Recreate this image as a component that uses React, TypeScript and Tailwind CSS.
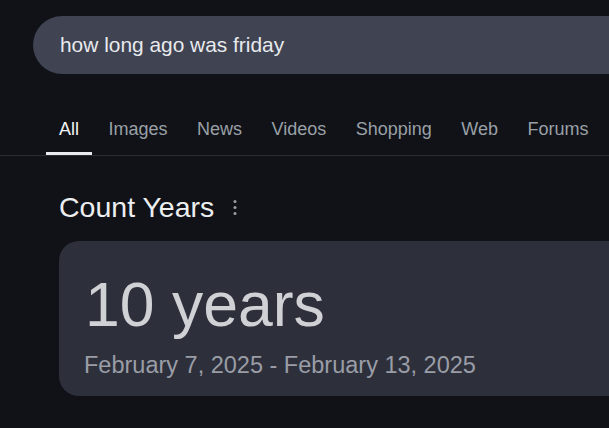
import React from "react";

const tabs = ["All", "Images", "News", "Videos", "Shopping", "Web", "Forums"];

export default function App() {
  return (
    <div
      className="w-[609px] h-[428px] overflow-hidden bg-[#101218]"
      style={{ fontFamily: '"Liberation Sans", Arial, sans-serif' }}
    >
      <div className="pt-[16px] pl-[33px]">
        <div className="w-[700px] h-[58px] rounded-full bg-[#3f4352] flex items-center pl-[27px]">
          <span className="text-[20.9px] leading-none text-[#e8eaed]">how long ago was friday</span>
        </div>
      </div>

      <div className="mt-[32px] border-b border-[#2a2c34]">
        <div className="flex pl-[46px] gap-[3.5px] whitespace-nowrap">
          {tabs.map((t, i) => (
            <div
              key={t}
              className={
                "h-[49px] px-[13px] flex items-center border-b-[3px] text-[18px] leading-none " +
                (i === 0 ? "border-[#e8eaed] text-[#f1f3f4]" : "border-transparent text-[#9aa0a6]")
              }
            >
              {t}
            </div>
          ))}
        </div>
      </div>

      <div className="mt-[37px] pl-[59px] flex items-center">
        <span className="text-[28.5px] leading-none text-[#eceef0]">Count Years</span>
        <svg className="ml-[19px]" width="4" height="15" viewBox="0 0 4 15" fill="#9aa0a6">
          <circle cx="2" cy="1.6" r="1.5" />
          <circle cx="2" cy="7.5" r="1.5" />
          <circle cx="2" cy="13.4" r="1.5" />
        </svg>
      </div>

      <div className="mt-[19px] ml-[59px] w-[620px] h-[155px] rounded-[20px] bg-[#2d303b] pt-[32px] pl-[26px]">
        <div className="text-[62.5px] leading-none text-[#d0d1d5]">10 years</div>
        <div className="mt-[19px] -ml-[1px] text-[23.5px] leading-none text-[#9a9da6]">
          February 7, 2025 - February 13, 2025
        </div>
      </div>
    </div>
  );
}
